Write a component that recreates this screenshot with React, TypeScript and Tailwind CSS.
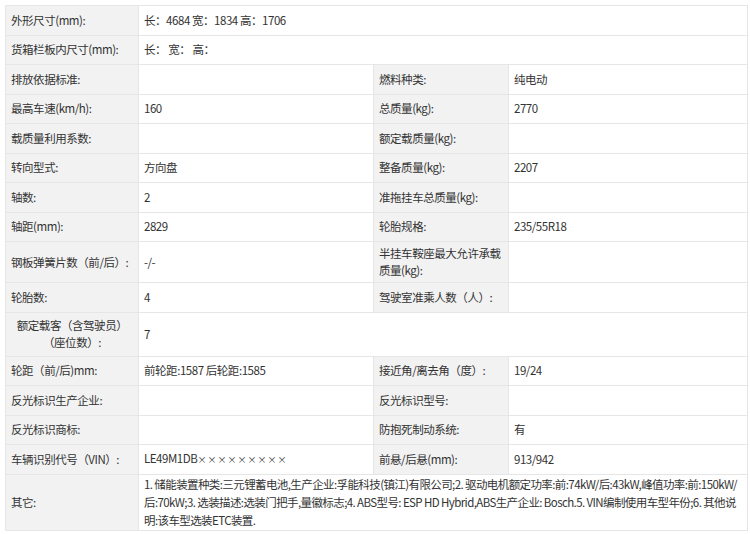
const rows: (string | null)[][] = [
  ["外形尺寸(mm):", "长：4684 宽：1834 高：1706"],
  ["货箱栏板内尺寸(mm):", "长：  宽：  高："],
  ["排放依据标准:", "", "燃料种类:", "纯电动"],
  ["最高车速(km/h):", "160", "总质量(kg):", "2770"],
  ["载质量利用系数:", "", "额定载质量(kg):", ""],
  ["转向型式:", "方向盘", "整备质量(kg):", "2207"],
  ["轴数:", "2", "准拖挂车总质量(kg):", ""],
  ["轴距(mm):", "2829", "轮胎规格:", "235/55R18"],
  ["钢板弹簧片数（前/后）:", "-/-", "半挂车鞍座最大允许承载质量(kg):", ""],
  ["轮胎数:", "4", "驾驶室准乘人数（人）:", ""],
  ["额定载客（含驾驶员）（座位数）:", "7"],
  ["轮距（前/后)mm:", "前轮距:1587 后轮距:1585", "接近角/离去角（度）:", "19/24"],
  ["反光标识生产企业:", "", "反光标识型号:", ""],
  ["反光标识商标:", "", "防抱死制动系统:", "有"],
  ["车辆识别代号（VIN）:", "LE49M1DB×××××××××", "前悬/后悬(mm):", "913/942"],
  [
    "其它:",
    "1. 储能装置种类:三元锂蓄电池,生产企业:孚能科技(镇江)有限公司;2. 驱动电机额定功率:前:74kW/后:43kW,峰值功率:前:150kW/后:70kW;3. 选装描述:选装门把手,量徽标志;4. ABS型号: ESP HD Hybrid,ABS生产企业: Bosch.5. VIN编制使用车型年份;6. 其他说明:该车型选装ETC装置.",
  ],
];

const label = "bg-[#f2f2f2] border border-[#e6e6e6] px-[5px] py-0 align-middle";
const value = "bg-white border border-[#e6e6e6] px-[5px] py-0 align-middle";

export default function App() {
  return (
    <div
      className="w-[750px] h-[534px] bg-white pt-[5px] pl-[5px] overflow-hidden text-[11.5px] leading-[17px] tracking-[-0.45px] text-[#333]"
      style={{ fontFamily: '"Noto Sans CJK SC", "Liberation Sans", sans-serif' }}
    >
      <table className="w-[742px] border-collapse table-fixed">
        <colgroup>
          <col className="w-[133px]" />
          <col className="w-[235px]" />
          <col className="w-[135px]" />
          <col className="w-[239px]" />
        </colgroup>
        <tbody>
          {rows.map((r, i) => {
            const h =
              i === 10 ? "h-[44px]" : i === 15 ? "h-[56px]" : i === 8 ? "h-[41px]" : "h-[29.5px]";
            const lbl = label + (i === 10 ? " text-center" : i === 8 ? "" : " whitespace-nowrap");
            return (
              <tr key={i} className={h}>
                <td className={lbl}>{r[0]}</td>
                {r.length === 2 ? (
                  <td colSpan={3} className={value + (i === 15 ? " leading-[18px] tracking-[-0.6px]" : "")}>
                    {r[1]}
                  </td>
                ) : (
                  <>
                    <td className={value}>
                      {i === 14 ? (
                        <span>
                          LE49M1DB<span className="text-[9px] tracking-[1px]">×××××××××</span>
                        </span>
                      ) : (
                        r[1]
                      )}
                    </td>
                    <td className={label + (i === 8 ? "" : " whitespace-nowrap")}>{r[2]}</td>
                    <td className={value}>{r[3]}</td>
                  </>
                )}
              </tr>
            );
          })}
        </tbody>
      </table>
    </div>
  );
}
